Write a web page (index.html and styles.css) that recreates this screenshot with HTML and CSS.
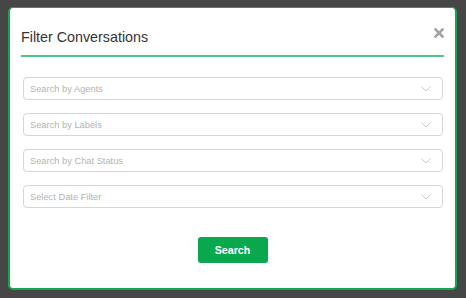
FILE: index.html
```html
<!DOCTYPE html>
<html>
<head>
<meta charset="utf-8">
<link rel="stylesheet" href="styles.css">
</head>
<body>
<div class="modal">
  <div class="header">
    <h1 class="title">Filter Conversations</h1>
    <svg class="close" width="10" height="10" viewBox="0 0 10 10"><path d="M1.5 1.5L8.5 8.5M8.5 1.5L1.5 8.5" stroke="#a3a3a3" stroke-width="2.6" stroke-linecap="square"/></svg>
  </div>
  <div class="body">
    <div class="select"><span>Search by Agents</span><svg class="chev" width="10" height="6" viewBox="0 0 10 6"><path d="M0.5 0.5L5 5L9.5 0.5" fill="none" stroke="#c8c8c8" stroke-width="1"/></svg></div>
    <div class="select"><span>Search by Labels</span><svg class="chev" width="10" height="6" viewBox="0 0 10 6"><path d="M0.5 0.5L5 5L9.5 0.5" fill="none" stroke="#c8c8c8" stroke-width="1"/></svg></div>
    <div class="select"><span>Search by Chat Status</span><svg class="chev" width="10" height="6" viewBox="0 0 10 6"><path d="M0.5 0.5L5 5L9.5 0.5" fill="none" stroke="#c8c8c8" stroke-width="1"/></svg></div>
    <div class="select"><span>Select Date Filter</span><svg class="chev" width="10" height="6" viewBox="0 0 10 6"><path d="M0.5 0.5L5 5L9.5 0.5" fill="none" stroke="#c8c8c8" stroke-width="1"/></svg></div>
  </div>
  <div class="footer">
    <button class="btn">Search</button>
  </div>
</div>
</body>
</html>
```
FILE: styles.css
```css
html, body {
  margin: 0;
  padding: 0;
}
body {
  background: #464646;
  width: 466px;
  height: 298px;
  padding: 7px 9px 0 8px;
  box-sizing: border-box;
  font-family: "Liberation Sans", Arial, sans-serif;
  overflow: hidden;
}
.modal {
  width: 449px;
  height: 283px;
  box-sizing: border-box;
  background: #fff;
  border: 2px solid #13a551;
  border-top-width: 1px;
  border-radius: 5px;
  display: flex;
  flex-direction: column;
}
.header {
  margin: 0 11px;
  padding: 19px 0 8px 0;
  border-bottom: 2px solid #4cc886;
  display: flex;
  justify-content: space-between;
  align-items: flex-start;
}
.title {
  margin: 0;
  font-size: 14.3px;
  font-weight: normal;
  line-height: 20px;
  color: #333;
}
.close {
  margin-top: 1px;
  margin-right: 0;
}
.body {
  margin: 20px 12px 0 13px;
  display: flex;
  flex-direction: column;
  gap: 13px;
}
.select {
  height: 23px;
  box-sizing: border-box;
  border: 1px solid #d6d6d6;
  border-radius: 4px;
  display: flex;
  align-items: center;
  justify-content: space-between;
  padding: 0 11px 0 6px;
  font-size: 9.3px;
  color: #b3b3b3;
}
.chev {
  display: block;
}
.footer {
  margin-top: 29px;
  display: flex;
  justify-content: center;
}
.btn {
  width: 70px;
  height: 26px;
  border: none;
  border-radius: 3px;
  background: #09a84f;
  color: #fff;
  font-family: "Liberation Sans", Arial, sans-serif;
  font-weight: bold;
  font-size: 10.7px;
  padding: 0;
  margin-left: 0;
}
```
